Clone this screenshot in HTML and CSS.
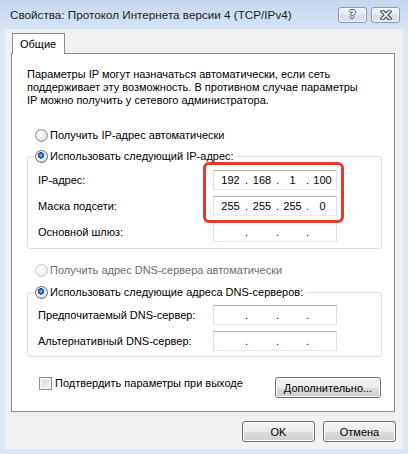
FILE: index.html
```html
<!DOCTYPE html>
<html lang="ru">
<head>
    <meta charset="UTF-8">
    <title>Свойства: Протокол Интернета версии 4 (TCP/IPv4)</title>
    <link rel="stylesheet" href="styles.css">
</head>
<body>
    <div class="window">
        <div class="titlebar">
            <span class="title">Свойства: Протокол Интернета версии 4 (TCP/IPv4)</span>
            <div class="caption-btns">
                <button type="button" class="cap-btn"><span class="help-glyph">?</span></button>
                <button type="button" class="cap-btn">
                    <svg width="12" height="10" viewBox="0 0 12 10">
                        <path d="M2.5 1.5 L9.5 8.5 M9.5 1.5 L2.5 8.5" stroke="#4a5360" stroke-width="4" stroke-linecap="square"/>
                        <path d="M2.5 1.5 L9.5 8.5 M9.5 1.5 L2.5 8.5" stroke="#ffffff" stroke-width="1.6" stroke-linecap="square"/>
                    </svg>
                </button>
            </div>
        </div>

        <div class="client">
            <div class="tabs">
                <div class="tab">Общие</div>
            </div>
            <div class="panel">
                <p class="desc">Параметры IP могут назначаться автоматически, если сеть<br>поддерживает эту возможность. В противном случае параметры<br>IP можно получить у сетевого администратора.</p>

                <label class="option first"><span class="radio"></span>Получить IP-адрес автоматически</label>

                <fieldset class="group group-ip">
                    <legend><label class="option"><span class="radio checked"></span>Использовать следующий IP-адрес:</label></legend>
                    <div class="fields">
                        <span class="field-label">IP-адрес:</span>
                        <div class="ip"><span class="oct o1">192</span><span class="dot">.</span><span class="oct o2">168</span><span class="dot">.</span><span class="oct o3">1</span><span class="dot">.</span><span class="oct o4">100</span></div>
                        <span class="field-label">Маска подсети:</span>
                        <div class="ip"><span class="oct o1">255</span><span class="dot">.</span><span class="oct o2">255</span><span class="dot">.</span><span class="oct o3">255</span><span class="dot">.</span><span class="oct o4">0</span></div>
                        <span class="field-label">Основной шлюз:</span>
                        <div class="ip"><span class="oct o1"></span><span class="dot">.</span><span class="oct o2"></span><span class="dot">.</span><span class="oct o3"></span><span class="dot">.</span><span class="oct o4"></span></div>
                        <div class="highlight"></div>
                    </div>
                </fieldset>

                <label class="option disabled"><span class="radio"></span>Получить адрес DNS-сервера автоматически</label>

                <fieldset class="group group-dns">
                    <legend><label class="option"><span class="radio checked"></span>Использовать следующие адреса DNS-серверов:</label></legend>
                    <div class="fields">
                        <span class="field-label">Предпочитаемый DNS-сервер:</span>
                        <div class="ip"><span class="oct o1"></span><span class="dot">.</span><span class="oct o2"></span><span class="dot">.</span><span class="oct o3"></span><span class="dot">.</span><span class="oct o4"></span></div>
                        <span class="field-label">Альтернативный DNS-сервер:</span>
                        <div class="ip"><span class="oct o1"></span><span class="dot">.</span><span class="oct o2"></span><span class="dot">.</span><span class="oct o3"></span><span class="dot">.</span><span class="oct o4"></span></div>
                    </div>
                </fieldset>

                <div class="bottom-row">
                    <label class="option check"><span class="checkbox"></span>Подтвердить параметры при выходе</label>
                    <button type="button" class="btn btn-advanced">Дополнительно...</button>
                </div>
            </div>

            <div class="footer">
                <button type="button" class="btn">OK</button>
                <button type="button" class="btn">Отмена</button>
            </div>
        </div>
    </div>
</body>
</html>
```
FILE: styles.css
```css
html, body {
    margin: 0;
    padding: 0;
}
body {
    width: 408px;
    height: 454px;
    overflow: hidden;
    background: #dbe6f4;
    font-family: "Liberation Sans", Arial, sans-serif;
    font-size: 11px;
    color: #000;
}
.window {
    height: 454px;
}
.titlebar {
    height: 29px;
    display: flex;
    align-items: flex-start;
    padding: 0 8px 0 10px;
    box-sizing: border-box;
    background: linear-gradient(#c5d7ee, #d6e3f3);
}
.title {
    margin-top: 7px;
    line-height: 16px;
    font-size: 11.7px;
    color: #1e1e1e;
}
.caption-btns {
    margin-left: auto;
    margin-top: 7px;
    display: flex;
    gap: 4px;
}
.cap-btn {
    width: 29px;
    height: 16px;
    padding: 0;
    border: 1px solid #8b9bb3;
    border-radius: 3px;
    background: linear-gradient(#eef3f9, #e1e8f2 50%, #d3ddea 50%, #dae3ef);
    display: flex;
    align-items: center;
    justify-content: center;
    box-shadow: inset 0 0 0 1px rgba(255, 255, 255, 0.6);
}
.help-glyph {
    font-family: "DejaVu Sans", sans-serif;
    font-weight: bold;
    font-size: 11px;
    line-height: 12px;
    color: #fff;
    text-shadow: 1px 0 #4a5360, -1px 0 #4a5360, 0 1px #4a5360, 0 -1px #4a5360;
}
.client {
    margin: 0 5px 5px;
    height: 420px;
    box-sizing: border-box;
    background: #f0f0f0;
    padding: 4px 7px 7px 6px;
}
.tabs {
    display: flex;
    height: 20px;
}
.tab {
    position: relative;
    z-index: 1;
    height: 21px;
    box-sizing: border-box;
    padding: 0 8px 0 7px;
    margin-left: 1px;
    border: 1px solid #898c95;
    border-bottom: none;
    background: #fff;
    line-height: 20px;
}
.panel {
    background: #fff;
    border: 1px solid #898c95;
    width: 384px;
    box-sizing: border-box;
    padding-bottom: 13px;
}
.desc {
    margin: 14px 0 0 15px;
    line-height: 13px;
}
.option {
    display: flex;
    align-items: center;
    height: 16px;
    line-height: 16px;
    white-space: nowrap;
}
.option.first {
    margin: 20px 0 0 23px;
}
.option.disabled {
    margin: 13px 0 0 23px;
    color: #6d6d6d;
}
.radio {
    flex: none;
    width: 13px;
    height: 13px;
    box-sizing: border-box;
    margin-right: 2px;
    border-radius: 50%;
    border: 1px solid #8d8d8d;
    background: radial-gradient(circle at 40% 35%, #ffffff 0, #ececec 45%, #c9c9c9 100%);
}
.radio.checked {
    border-color: #6b6b6b;
    background:
        radial-gradient(circle at 45% 40%, #8fd1ff 0, #2a7fcb 1.6px, #0f3d70 3px, transparent 3.4px),
        radial-gradient(circle at 40% 35%, #ffffff 0, #ececec 45%, #c9c9c9 100%);
}
.disabled .radio {
    border-color: #c6c6c6;
    background: radial-gradient(circle at 40% 35%, #ffffff 0, #f4f4f4 50%, #e2e2e2 100%);
}
.group {
    margin: 5px 12px 0 15px;
    padding: 0;
    border: 1px solid #d5dfe5;
    border-radius: 3px;
    min-width: 0;
}
.group-dns {
    margin-top: 6px;
}
.group legend {
    margin-left: 6px;
    padding: 0 3px 0 1px;
}
.fields {
    position: relative;
    display: grid;
    grid-template-columns: 175px 124px;
    row-gap: 6px;
    align-items: center;
    padding: 6px 0 6px 10px;
}
.group-dns .fields {
    padding: 5px 0 5px 10px;
}
.field-label {
    white-space: nowrap;
}
.ip {
    display: flex;
    align-items: center;
    height: 20px;
    box-sizing: border-box;
    padding-left: 2px;
    border: 1px solid #dbdfe6;
    border-top-color: #abadb3;
    border-bottom-color: #e3e9ef;
    background: #fff;
    line-height: 18px;
}
.oct {
    text-align: center;
}
.o1 { width: 29px; }
.o2 { width: 28px; }
.o3 { width: 27px; }
.o4 { width: 27px; }
.dot {
    width: 3px;
    text-align: center;
}
.highlight {
    position: absolute;
    left: 175px;
    top: -2px;
    width: 141px;
    height: 61px;
    box-sizing: border-box;
    border: 3px solid #e3392f;
    border-radius: 6px;
}
.bottom-row {
    display: flex;
    align-items: flex-start;
    justify-content: space-between;
    margin: 18px 13px 0 27px;
}
.checkbox {
    flex: none;
    width: 13px;
    height: 13px;
    box-sizing: border-box;
    margin-right: 3px;
    border: 1px solid #8e8f8f;
    background: linear-gradient(135deg, #cfcfcf, #f7f7f7);
    box-shadow: inset 0 0 0 2px #f3f3f3;
}
.btn {
    height: 21px;
    width: 73px;
    padding: 0;
    font-family: inherit;
    font-size: 11px;
    color: #000;
    border: 1px solid #707070;
    border-radius: 3px;
    background: linear-gradient(#f2f2f2, #ebebeb 50%, #dddddd 50%, #cfcfcf);
    box-shadow: inset 0 0 0 1px #fcfcfc;
}
.btn-advanced {
    width: 106px;
    margin-top: 2px;
}
.footer {
    display: flex;
    justify-content: flex-end;
    gap: 8px;
    margin-top: 9px;
}
```
